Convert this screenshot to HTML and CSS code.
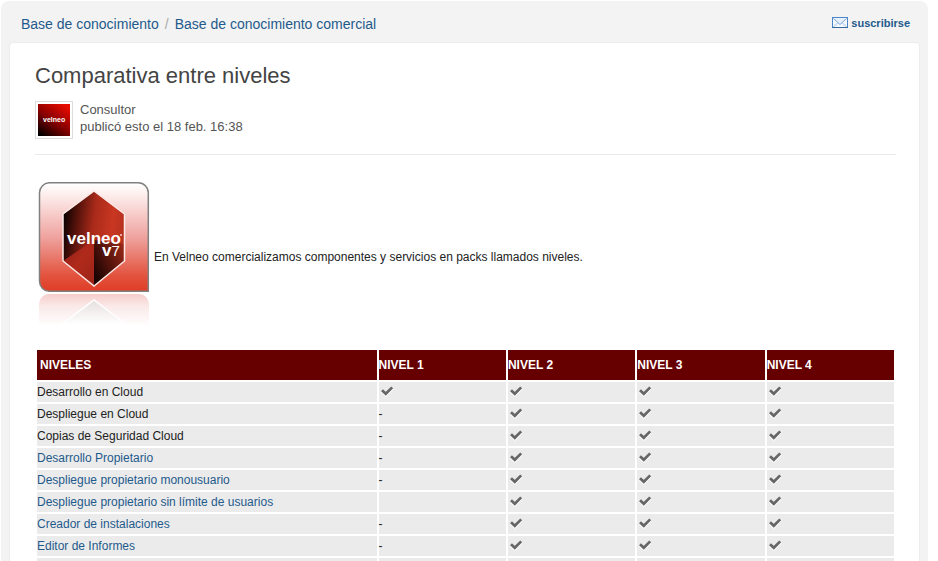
FILE: index.html
```html
<!DOCTYPE html>
<html lang="es">
<head>
    <meta charset="UTF-8">
    <meta name="viewport" content="width=device-width, initial-scale=1.0">
    <title>Comparativa entre niveles</title>
    <link rel="stylesheet" href="styles.css">
</head>
<body>
    <!-- Shared icons -->
    <svg width="0" height="0" class="sprite" aria-hidden="true">
        <symbol id="check" viewBox="0 0 16 16">
            <path d="M3 7.2 L6.8 10.8 L13.2 4.4" fill="none" stroke="#fff" stroke-width="3"/>
            <path d="M3 6.2 L6.8 9.8 L13.2 3.4" fill="none" stroke="#666" stroke-width="2.700"/>
        </symbol>
    </svg>

    <div class="page">
        <div class="top-bar">
            <nav class="breadcrumb">
                <a href="#">Base de conocimiento</a>
                <span class="separator">/</span>
                <a href="#">Base de conocimiento comercial</a>
            </nav>
            <a href="#" class="subscribe">
                <svg width="16" height="12" viewBox="0 0 16 12" aria-hidden="true">
                    <rect x="0.5" y="0.5" width="15" height="10" fill="#f4f9ff" stroke="#4a86cc"/>
                    <path d="M1.500 10 L6 5.500 M14.500 10 L10 5.500" stroke="#9fc0e6" fill="none"/>
                    <path d="M1.500 1.500 L8 7.500 L14.500 1.500" stroke="#78a5da" fill="#e6f0fb"/>
                    <path d="M0 10.500 H16" stroke="#3468a8"/>
                </svg>
                suscribirse
            </a>
        </div>

        <main class="content">
            <h1>Comparativa entre niveles</h1>
            <div class="author">
                <svg class="avatar" width="32" height="32" viewBox="0 0 32 32" role="img" aria-label="Consultor">
                    <defs>
                        <linearGradient id="avatar-bg" x1="0.1" y1="1" x2="0.8" y2="0">
                            <stop offset="0" stop-color="#000"/>
                            <stop offset="0.5" stop-color="#800"/>
                            <stop offset="1" stop-color="#e80c00"/>
                        </linearGradient>
                    </defs>
                    <rect width="32" height="32" fill="url(#avatar-bg)"/>
                    <text x="5" y="18" class="avatar-text">velneo</text>
                </svg>
                <div class="author-info">
                    <div>Consultor</div>
                    <div>publicó esto el 18 feb. 16:38</div>
                </div>
            </div>

            <div class="article">
                <p class="intro">
                    <svg class="logo" width="115" height="158" viewBox="0 0 115 158" role="img" aria-label="Velneo V7">
                        <defs>
                            <linearGradient id="box-bg" x1="0" y1="0" x2="0" y2="1">
                                <stop offset="0" stop-color="#fff"/>
                                <stop offset="0.1" stop-color="#fdf0ef"/>
                                <stop offset="0.5" stop-color="#efa39f"/>
                                <stop offset="0.85" stop-color="#e2543f"/>
                                <stop offset="1" stop-color="#df3c25"/>
                            </linearGradient>
                            <linearGradient id="hex-bg" x1="0" y1="0.2" x2="1" y2="0.4">
                                <stop offset="0" stop-color="#000"/>
                                <stop offset="0.2" stop-color="#4a0f09"/>
                                <stop offset="0.5" stop-color="#a92a1a"/>
                                <stop offset="0.8" stop-color="#c93722"/>
                                <stop offset="1" stop-color="#b5301e"/>
                            </linearGradient>
                            <linearGradient id="hex-left" x1="0" y1="0" x2="1" y2="1">
                                <stop offset="0" stop-color="#8c2015"/>
                                <stop offset="0.5" stop-color="#b02a1b"/>
                                <stop offset="1" stop-color="#9c2418"/>
                            </linearGradient>
                            <linearGradient id="hex-right" x1="0" y1="0.7" x2="1" y2="0">
                                <stop offset="0" stop-color="#1c0402"/>
                                <stop offset="0.5" stop-color="#5d160d"/>
                                <stop offset="1" stop-color="#a52a1a"/>
                            </linearGradient>
                            <linearGradient id="mirror-bg" x1="0" y1="0" x2="0" y2="1">
                                <stop offset="0" stop-color="#f6cdca"/>
                                <stop offset="0.35" stop-color="#faeae9"/>
                                <stop offset="0.9" stop-color="#fff"/>
                            </linearGradient>
                            <linearGradient id="mirror-hex" x1="0" y1="0" x2="0" y2="1">
                                <stop offset="0" stop-color="#e6dfdd"/>
                                <stop offset="0.9" stop-color="#fff"/>
                            </linearGradient>
                        </defs>
                        <path d="M14 4.800 H103.300 A10 10 0 0 1 113.300 14.800 V113.300 H14 A10 10 0 0 1 4.500 103.300 V14.800 A10 10 0 0 1 14 4.800 Z" fill="url(#box-bg)" stroke="#808080" stroke-width="1.500"/>
                        <path d="M59 13 L89.500 36 V83 L59 108 L28 83 V36 Z" fill="url(#hex-bg)"/>
                        <path d="M28 83 L59 62 V108 Z" fill="url(#hex-left)"/>
                        <path d="M59 62 L89.500 66 V83 L59 108 Z" fill="url(#hex-right)"/>
                        <path d="M59 13 L89.500 36 V83 L59 108 L28 83 V36 Z" fill="none" stroke="#fbe9e7" stroke-width="1.500"/>
                        <text x="32" y="66" class="logo-name">velneo<tspan x="67" y="78">v</tspan><tspan class="logo-number">7</tspan></text>
                        <circle cx="86" cy="57" r="1" fill="#f3cfca"/>
                        <path d="M14 116 H104 A10 10 0 0 1 114 126 V152 H4 V126 A10 10 0 0 1 14 116 Z" fill="url(#mirror-bg)"/>
                        <path d="M59 122 L95 149 H23 Z" fill="url(#mirror-hex)"/>
                        <path d="M26 147 L59 122 L92 147" fill="none" stroke="#fff" stroke-width="1.500"/>
                    </svg>
                    <span>En Velneo comercializamos componentes y servicios en packs llamados niveles.</span>
                </p>

                <table class="levels">
                    <thead>
                        <tr>
                            <th class="name">NIVELES</th>
                            <th>NIVEL 1</th>
                            <th>NIVEL 2</th>
                            <th>NIVEL 3</th>
                            <th>NIVEL 4</th>
                        </tr>
                    </thead>
                    <tbody>
                        <tr>
                            <td>Desarrollo en Cloud</td>
                            <td><svg class="check"><use href="#check"/></svg></td>
                            <td><svg class="check"><use href="#check"/></svg></td>
                            <td><svg class="check"><use href="#check"/></svg></td>
                            <td><svg class="check"><use href="#check"/></svg></td>
                        </tr>
                        <tr>
                            <td>Despliegue en Cloud</td>
                            <td>-</td>
                            <td><svg class="check"><use href="#check"/></svg></td>
                            <td><svg class="check"><use href="#check"/></svg></td>
                            <td><svg class="check"><use href="#check"/></svg></td>
                        </tr>
                        <tr>
                            <td>Copias de Seguridad Cloud</td>
                            <td>-</td>
                            <td><svg class="check"><use href="#check"/></svg></td>
                            <td><svg class="check"><use href="#check"/></svg></td>
                            <td><svg class="check"><use href="#check"/></svg></td>
                        </tr>
                        <tr>
                            <td><a href="#">Desarrollo Propietario</a></td>
                            <td>-</td>
                            <td><svg class="check"><use href="#check"/></svg></td>
                            <td><svg class="check"><use href="#check"/></svg></td>
                            <td><svg class="check"><use href="#check"/></svg></td>
                        </tr>
                        <tr>
                            <td><a href="#">Despliegue propietario monousuario</a></td>
                            <td>-</td>
                            <td><svg class="check"><use href="#check"/></svg></td>
                            <td><svg class="check"><use href="#check"/></svg></td>
                            <td><svg class="check"><use href="#check"/></svg></td>
                        </tr>
                        <tr>
                            <td><a href="#">Despliegue propietario sin límite de usuarios</a></td>
                            <td></td>
                            <td><svg class="check"><use href="#check"/></svg></td>
                            <td><svg class="check"><use href="#check"/></svg></td>
                            <td><svg class="check"><use href="#check"/></svg></td>
                        </tr>
                        <tr>
                            <td><a href="#">Creador de instalaciones</a></td>
                            <td>-</td>
                            <td><svg class="check"><use href="#check"/></svg></td>
                            <td><svg class="check"><use href="#check"/></svg></td>
                            <td><svg class="check"><use href="#check"/></svg></td>
                        </tr>
                        <tr>
                            <td><a href="#">Editor de Informes</a></td>
                            <td>-</td>
                            <td><svg class="check"><use href="#check"/></svg></td>
                            <td><svg class="check"><use href="#check"/></svg></td>
                            <td><svg class="check"><use href="#check"/></svg></td>
                        </tr>
                        <tr>
                            <td></td>
                            <td></td>
                            <td></td>
                            <td></td>
                            <td></td>
                        </tr>
                    </tbody>
                </table>
            </div>
        </main>
    </div>
</body>
</html>
```

FILE: styles.css
```css
body {
    font-family: "Liberation Sans", Arial, sans-serif;
    font-size: 12px;
    line-height: 18px;
    color: #222;
    background-color: #fff;
    margin: 0;
    padding: 1px 10px 0 1px;
}
a {
    color: #1f5a8b;
    text-decoration: none;
}
a:hover {
    text-decoration: underline;
}
.sprite {
    display: block;
}
.page {
    background-color: #f3f3f3;
    border-radius: 8px;
    padding: 0 8px 8px;
}
.top-bar {
    display: flex;
    justify-content: space-between;
    align-items: flex-start;
    padding: 13px 10px 8px 12px;
}
.breadcrumb {
    display: flex;
    gap: 6px;
    font-size: 14px;
    line-height: 20px;
}
.separator {
    color: #aaa;
}
.subscribe {
    display: flex;
    align-items: center;
    gap: 3px;
    font-size: 11px;
    font-weight: bold;
}
.content {
    background-color: #fff;
    border: 1px solid #ececec;
    border-radius: 4px;
    padding: 20px 23px 24px 25px;
}
h1 {
    margin: 0;
    font-size: 22px;
    font-weight: normal;
    line-height: 26px;
    color: #444;
}
.author {
    display: flex;
    gap: 7px;
    margin-top: 12px;
    padding-bottom: 15px;
    border-bottom: 1px solid #eaeaea;
}
.avatar {
    border: 1px solid #ddd;
    padding: 2px;
}
.avatar-text {
    font-size: 7px;
    font-weight: bold;
    fill: #fff;
}
.author-info {
    font-size: 13px;
    line-height: 17px;
    color: #555;
}
.intro {
    display: flex;
    align-items: center;
    gap: 4px;
    margin: 23px 0 12px;
}
.logo {
    flex-shrink: 0;
}
.logo-name {
    font-size: 17px;
    font-weight: bold;
    fill: #fff;
}
.logo-number {
    font-size: 15px;
    font-weight: normal;
}
.levels {
    width: 100%;
    table-layout: fixed;
    border-spacing: 2px;
}
.levels th {
    height: 30px;
    padding: 0;
    background-color: #600;
    color: #fff;
    text-align: left;
}
.levels .name {
    width: 40%;
    padding-left: 3px;
    box-sizing: border-box;
}
.levels td {
    height: 20px;
    padding: 0;
    background-color: #ebebeb;
}
.check {
    display: block;
    width: 16px;
    height: 16px;
}
```
